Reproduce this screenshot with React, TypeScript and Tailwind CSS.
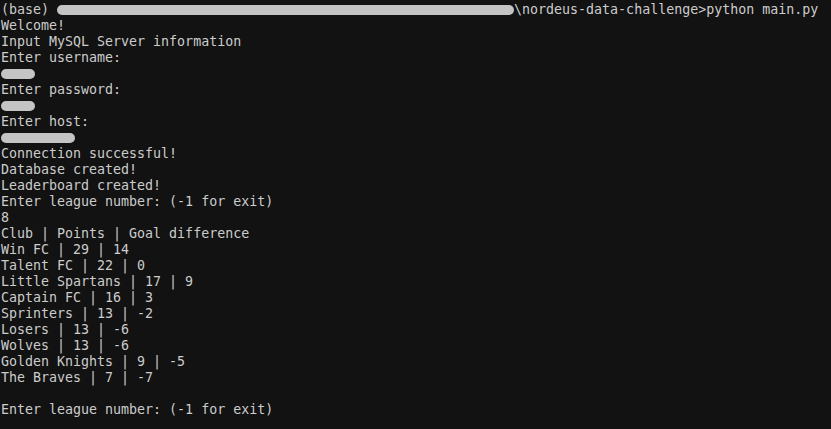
import React from 'react';

const Blur = ({ w, className = '' }: { w: string; className?: string }) => (
  <span className={`inline-block h-[10px] rounded-full bg-[#c4c4c4] align-middle ${w} ${className}`} />
);

export default function App() {
  const lines = [
    'Welcome!',
    'Input MySQL Server information',
    'Enter username:',
    null,
    'Enter password:',
    null,
    'Enter host:',
    null,
    'Connection successful!',
    'Database created!',
    'Leaderboard created!',
    'Enter league number: (-1 for exit)',
    '8',
    'Club | Points | Goal difference',
    'Win FC | 29 | 14',
    'Talent FC | 22 | 0',
    'Little Spartans | 17 | 9',
    'Captain FC | 16 | 3',
    'Sprinters | 13 | -2',
    'Losers | 13 | -6',
    'Wolves | 13 | -6',
    'Golden Knights | 9 | -5',
    'The Braves | 7 | -7',
    '',
    'Enter league number: (-1 for exit)',
  ];
  const blurs = ['w-[34px]', 'w-[34px]', 'w-[74px]'];
  let b = 0;

  return (
    <div className="w-[831px] h-[429px] bg-[#121212] overflow-hidden pl-px pt-[2px] text-[#cccccc] text-[13.3px] leading-[16px] whitespace-pre font-['DejaVu_Sans_Mono',monospace]">
      <div className="h-4 flex items-center">
        <span>(base) </span>
        <Blur w="w-[457px]" />
        <span>\nordeus-data-challenge&gt;python main.py</span>
      </div>
      {lines.map((l, i) =>
        l === null ? (
          <div key={i} className="h-4 flex items-center">
            <Blur w={blurs[b++]} />
          </div>
        ) : (
          <div key={i} className="h-4">{l}</div>
        )
      )}
    </div>
  );
}
